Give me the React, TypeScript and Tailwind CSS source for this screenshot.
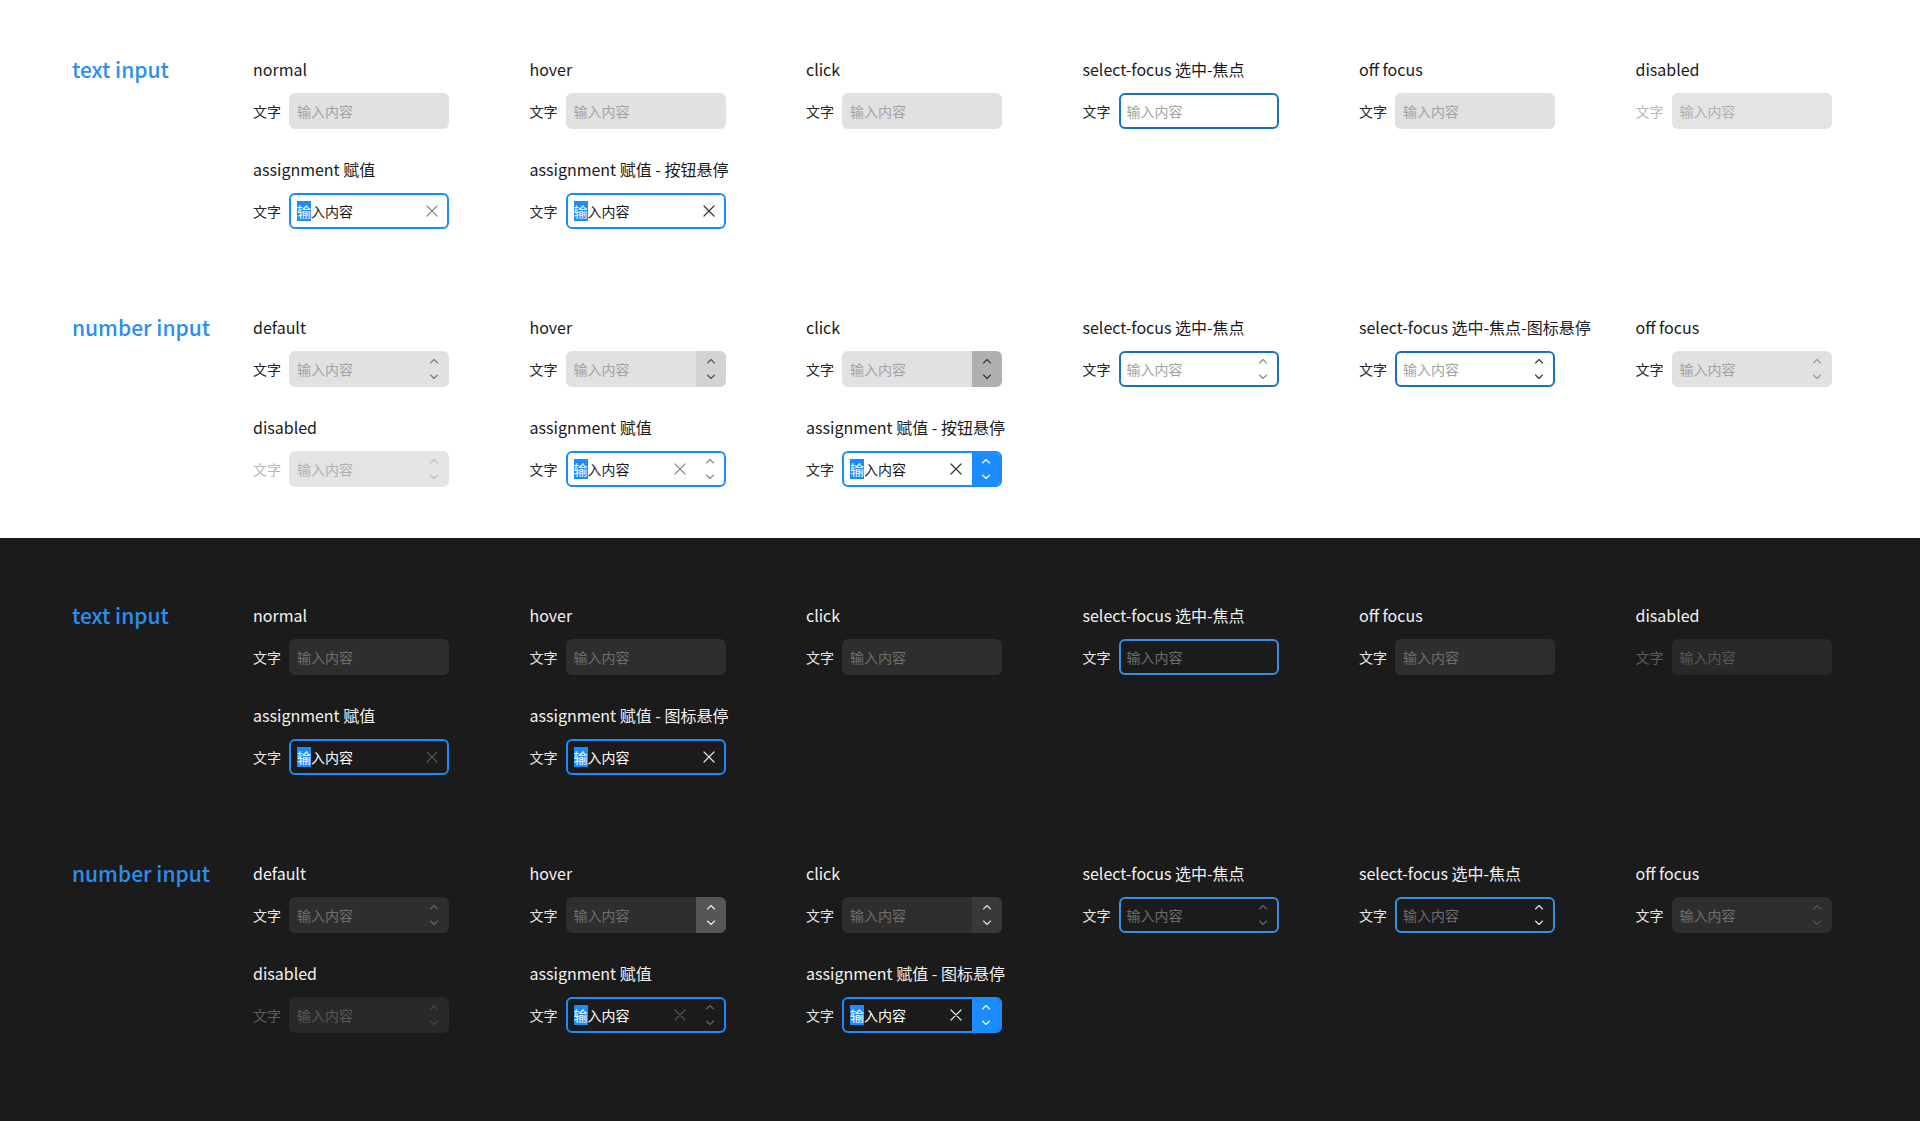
import React from 'react';

type Field = {
  title: string;
  box: string;
  tag?: string;
  hint?: string;
  value?: string;
  clear?: string;
  step?: { bg: string; icon: string };
};

type Group = { name: string; rows: Field[][] };

function Chevrons({ className }: { className: string }) {
  return (
    <svg width="10" height="22" viewBox="0 0 10 22" fill="none" className={className}>
      <path d="M1.5 5L5 1.5L8.5 5" stroke="currentColor" strokeWidth="1.1" strokeLinecap="round" strokeLinejoin="round" />
      <path d="M1.5 17L5 20.5L8.5 17" stroke="currentColor" strokeWidth="1.1" strokeLinecap="round" strokeLinejoin="round" />
    </svg>
  );
}

function Cross({ className }: { className: string }) {
  return (
    <svg width="12" height="12" viewBox="0 0 12 12" fill="none" className={className}>
      <path d="M1 1L11 11M11 1L1 11" stroke="currentColor" strokeWidth="1.2" strokeLinecap="round" />
    </svg>
  );
}

function Item({ f, dark }: { f: Field; dark: boolean }) {
  const bordered = f.box.includes('border-2');
  return (
    <div className="flex flex-col">
      <div className={`text-[16px] leading-[24px] h-[24px] whitespace-nowrap ${dark ? 'text-[#f2f2f2]' : 'text-[#1a1a1a]'}`}>
        {f.title}
      </div>
      <div className="mt-3 flex items-center">
        <span className={`w-[28px] text-[14px] leading-[20px] whitespace-nowrap ${f.tag ?? (dark ? 'text-[#e6e6e6]' : 'text-[#262626]')}`}>
          文字
        </span>
        <div className={`ml-2 flex h-[36px] w-[160px] items-stretch overflow-hidden rounded-[6px] ${f.box}`}>
          <div className={`flex flex-1 items-center ${bordered ? 'pl-[6px]' : 'pl-2'}`}>
            {f.value ? (
              <span className={`text-[14px] leading-[20px] ${dark ? 'text-white' : 'text-[#1a1a1a]'}`}>
                <span className="bg-[#1a8cff] text-white">输</span>入内容
              </span>
            ) : (
              <span className={`text-[14px] leading-[20px] ${f.hint}`}>输入内容</span>
            )}
          </div>
          {f.clear && (
            <div className={`flex items-center ${f.step ? 'pr-[10px]' : 'pr-[9px]'}`}>
              <Cross className={f.clear} />
            </div>
          )}
          {f.step && (
            <div className={`flex items-center justify-center ${bordered ? 'w-[28px]' : 'w-[30px]'} ${f.step.bg}`}>
              <Chevrons className={f.step.icon} />
            </div>
          )}
        </div>
      </div>
    </div>
  );
}

const L_BOX = 'bg-[#e1e1e1]';
const L_HINT = 'text-[#a3a3a3]';
const L_FOCUS = 'bg-white border-2 border-[#1a6fc9]';
const L_ASSIGN = 'bg-white border-2 border-[#1a8cff]';
const L_DIS_TAG = 'text-[#b8b8b8]';
const L_DIS_BOX = 'bg-[#e4e4e4]';
const L_DIS_HINT = 'text-[#b0b0b0]';

const D_BOX = 'bg-[#2e2e2e]';
const D_HINT = 'text-[#6e6e6e]';
const D_FOCUS = 'bg-[#1b1b1b] border-2 border-[#3a8ee6]';
const D_ASSIGN = 'bg-[#1b1b1b] border-2 border-[#1a8cff]';
const D_DIS_TAG = 'text-[#5c5c5c]';
const D_DIS_BOX = 'bg-[#292929]';
const D_DIS_HINT = 'text-[#585858]';

const light: Group[] = [
  {
    name: 'text input',
    rows: [
      [
        { title: 'normal', box: L_BOX, hint: L_HINT },
        { title: 'hover', box: L_BOX, hint: L_HINT },
        { title: 'click', box: L_BOX, hint: L_HINT },
        { title: 'select-focus 选中-焦点', box: L_FOCUS, hint: L_HINT },
        { title: 'off focus', box: L_BOX, hint: L_HINT },
        { title: 'disabled', box: L_DIS_BOX, hint: L_DIS_HINT, tag: L_DIS_TAG },
      ],
      [
        { title: 'assignment 赋值', box: L_ASSIGN, value: 'x', clear: 'text-[#8a8a8a]' },
        { title: 'assignment 赋值 - 按钮悬停', box: L_ASSIGN, value: 'x', clear: 'text-[#333333]' },
      ],
    ],
  },
  {
    name: 'number input',
    rows: [
      [
        { title: 'default', box: L_BOX, hint: L_HINT, step: { bg: '', icon: 'text-[#7a7a7a]' } },
        { title: 'hover', box: L_BOX, hint: L_HINT, step: { bg: 'bg-[#d3d3d3]', icon: 'text-[#555555]' } },
        { title: 'click', box: L_BOX, hint: L_HINT, step: { bg: 'bg-[#b0b0b0]', icon: 'text-[#333333]' } },
        { title: 'select-focus 选中-焦点', box: L_FOCUS, hint: L_HINT, step: { bg: '', icon: 'text-[#8a8a8a]' } },
        { title: 'select-focus 选中-焦点-图标悬停', box: L_FOCUS, hint: L_HINT, step: { bg: '', icon: 'text-[#333333]' } },
        { title: 'off focus', box: L_BOX, hint: L_HINT, step: { bg: '', icon: 'text-[#9a9a9a]' } },
      ],
      [
        { title: 'disabled', box: L_DIS_BOX, hint: L_DIS_HINT, tag: L_DIS_TAG, step: { bg: '', icon: 'text-[#bdbdbd]' } },
        { title: 'assignment 赋值', box: L_ASSIGN, value: 'x', clear: 'text-[#8a8a8a]', step: { bg: '', icon: 'text-[#8a8a8a]' } },
        { title: 'assignment 赋值 - 按钮悬停', box: L_ASSIGN, value: 'x', clear: 'text-[#333333]', step: { bg: 'bg-[#1a8cff]', icon: 'text-white' } },
      ],
    ],
  },
];

const dark: Group[] = [
  {
    name: 'text input',
    rows: [
      [
        { title: 'normal', box: D_BOX, hint: D_HINT },
        { title: 'hover', box: D_BOX, hint: D_HINT },
        { title: 'click', box: D_BOX, hint: D_HINT },
        { title: 'select-focus 选中-焦点', box: D_FOCUS, hint: D_HINT },
        { title: 'off focus', box: D_BOX, hint: D_HINT },
        { title: 'disabled', box: D_DIS_BOX, hint: D_DIS_HINT, tag: D_DIS_TAG },
      ],
      [
        { title: 'assignment 赋值', box: D_ASSIGN, value: 'x', clear: 'text-[#555555]' },
        { title: 'assignment 赋值 - 图标悬停', box: D_ASSIGN, value: 'x', clear: 'text-[#e6e6e6]' },
      ],
    ],
  },
  {
    name: 'number input',
    rows: [
      [
        { title: 'default', box: D_BOX, hint: D_HINT, step: { bg: '', icon: 'text-[#666666]' } },
        { title: 'hover', box: D_BOX, hint: D_HINT, step: { bg: 'bg-[#565656]', icon: 'text-[#f0f0f0]' } },
        { title: 'click', box: D_BOX, hint: D_HINT, step: { bg: 'bg-[#393939]', icon: 'text-[#e0e0e0]' } },
        { title: 'select-focus 选中-焦点', box: D_FOCUS, hint: D_HINT, step: { bg: '', icon: 'text-[#666666]' } },
        { title: 'select-focus 选中-焦点', box: D_FOCUS, hint: D_HINT, step: { bg: '', icon: 'text-[#e6e6e6]' } },
        { title: 'off focus', box: D_BOX, hint: D_HINT, step: { bg: '', icon: 'text-[#555555]' } },
      ],
      [
        { title: 'disabled', box: D_DIS_BOX, hint: D_DIS_HINT, tag: D_DIS_TAG, step: { bg: '', icon: 'text-[#474747]' } },
        { title: 'assignment 赋值', box: D_ASSIGN, value: 'x', clear: 'text-[#555555]', step: { bg: '', icon: 'text-[#666666]' } },
        { title: 'assignment 赋值 - 图标悬停', box: D_ASSIGN, value: 'x', clear: 'text-[#e6e6e6]', step: { bg: 'bg-[#1a8cff]', icon: 'text-white' } },
      ],
    ],
  },
];

function Section({ groups, dark: isDark }: { groups: Group[]; dark: boolean }) {
  return (
    <section
      className={
        isDark
          ? 'flex h-[583px] flex-col gap-[86px] bg-[#1b1b1b] pl-[72px] pt-[65px]'
          : 'flex h-[538px] flex-col gap-[86px] bg-white pl-[72px] pt-[57px]'
      }
    >
      {groups.map((g) => (
        <div key={g.name} className="flex">
          <div className="w-[181px] text-[21px] font-medium leading-[24px] text-[#2b8ef0]">{g.name}</div>
          <div className="flex flex-col gap-[28px]">
            {g.rows.map((row, i) => (
              <div key={i} className="grid grid-cols-[repeat(6,276.5px)]">
                {row.map((f, j) => (
                  <Item key={j} f={f} dark={isDark} />
                ))}
              </div>
            ))}
          </div>
        </div>
      ))}
    </section>
  );
}

export default function App() {
  return (
    <div className="min-h-screen w-full bg-[#1b1b1b] font-['Noto_Sans_CJK_SC','Noto_Sans',sans-serif]">
      <Section groups={light} dark={false} />
      <Section groups={dark} dark={true} />
    </div>
  );
}
